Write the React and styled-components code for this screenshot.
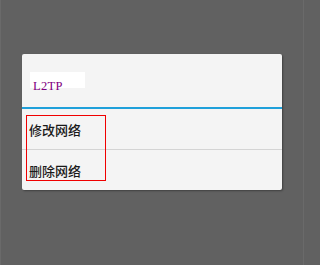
import React from "react";
import styled, { createGlobalStyle } from "styled-components";

const Global = createGlobalStyle`
  html, body { margin: 0; padding: 0; }
  body {
    background: #616161;
    width: 304px;
    height: 265px;
    overflow: hidden;
    font-family: "Noto Sans CJK SC", "Noto Sans", sans-serif;
  }
`;

const Screen = styled.div`
  width: 304px;
  height: 265px;
  box-sizing: border-box;
  padding: 54px 0 0 22px;
  border-left: 1px solid #6a6a6a;
  border-right: 1px solid #6a6a6a;
`;

const Card = styled.div`
  position: relative;
  width: 260px;
  background: #f4f4f4;
  border-radius: 2px;
  box-shadow: 1px 1px 2px rgba(0, 0, 0, 0.35);
  margin-left: -1px;
`;

const Header = styled.div`
  height: 53px;
  box-sizing: border-box;
  padding: 18px 0 0 8px;
`;

const TagBox = styled.div`
  width: 55px;
  height: 16px;
  background: #ffffff;
`;

const TagText = styled.div`
  padding: 7px 0 0 3px;
  font-family: "Liberation Serif", "DejaVu Serif", serif;
  font-size: 12.5px;
  line-height: 14px;
  letter-spacing: 0.3px;
  color: #800080;
  white-space: nowrap;
`;

const TitleRule = styled.div`
  height: 2px;
  background: #1fa0da;
`;

const Item = styled.div`
  height: 40px;
  display: flex;
  align-items: center;
  padding-left: 7px;
  font-size: 13px;
  font-weight: 500;
  color: #1a1a1a;
  border-top: ${(p) => (p.$divider ? "1px solid #d4d4d4" : "none")};
`;

const Highlight = styled.div`
  position: absolute;
  left: 4px;
  top: 61px;
  width: 80px;
  height: 66px;
  box-sizing: border-box;
  border: 1px solid #f00000;
  pointer-events: none;
`;

export default function App() {
  return (
    <>
      <Global />
      <Screen>
        <Card>
          <Header>
            <TagBox>
              <TagText>L2TP</TagText>
            </TagBox>
          </Header>
          <TitleRule />
          <Item>修改网络</Item>
          <Item $divider>删除网络</Item>
          <Highlight />
        </Card>
      </Screen>
    </>
  );
}
